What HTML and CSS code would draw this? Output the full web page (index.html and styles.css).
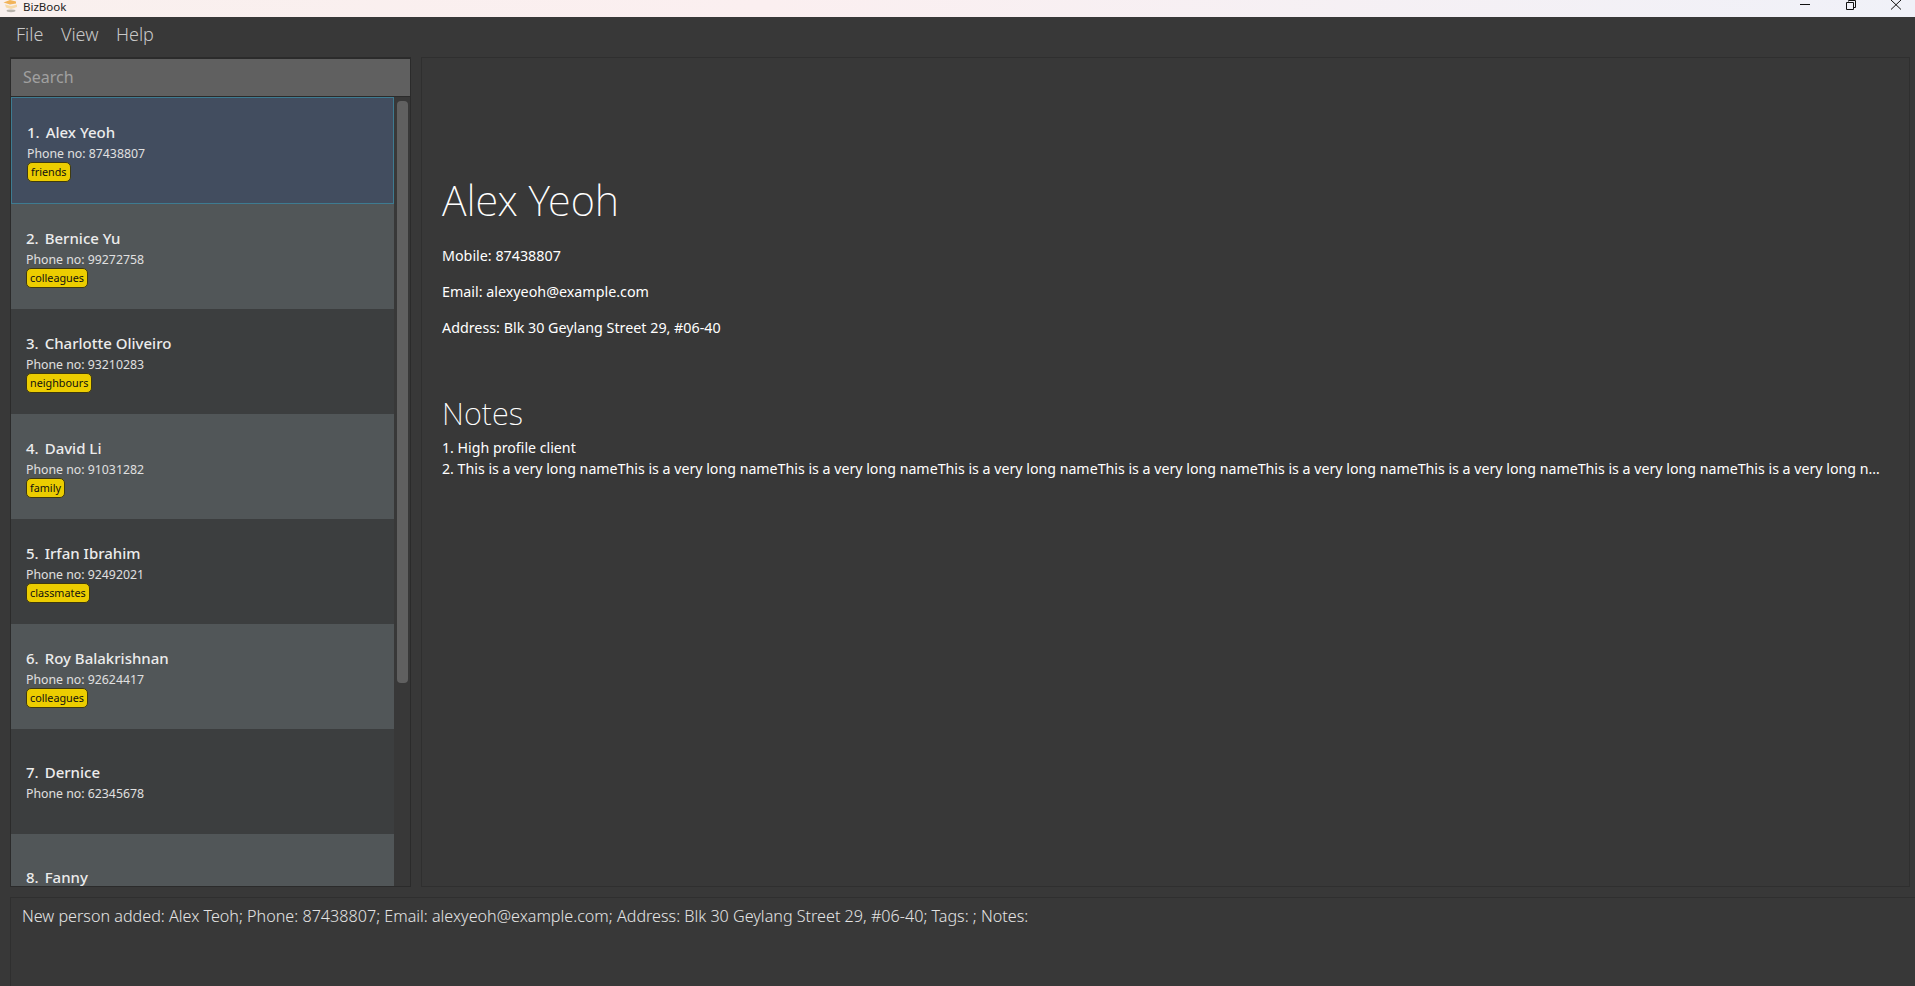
FILE: index.html
```html
<!DOCTYPE html>
<html lang="en">
  <head>
    <meta charset="UTF-8" />
    <title>BizBook</title>
    <link rel="stylesheet" href="styles.css">
  </head>
  <body>
    <header class="titlebar">
      <div class="app-name">
        <svg class="app-icon" width="14" height="13" viewBox="0 0 14 13">
          <ellipse cx="8" cy="10.8" rx="4.5" ry="1.4" fill="#b9b4ac" />
          <path d="M0.5 2.5 L7 0 L13 1.5 L13 3.5 L7 4.5 Z" fill="#f2b45a" />
          <path d="M2 4.5 L8 6 L14 4.5 L14 7 L8 9 L3 7.5 Z" fill="#f6d9a8" />
        </svg>
        <span>BizBook</span>
      </div>
      <div class="window-btns">
        <svg width="12" height="12" viewBox="0 0 12 12"><path d="M1 4.5h10" stroke="#111" fill="none" /></svg>
        <svg width="12" height="12" viewBox="0 0 12 12"><path d="M1.5 2.5h7v7h-7zM3.5 1.5V0.5h7v7H9" stroke="#111" fill="none" /></svg>
        <svg width="12" height="12" viewBox="0 0 12 12"><path d="M1 0l10 9.5M11 0L1 9.5" stroke="#111" fill="none" /></svg>
      </div>
    </header>

    <nav class="menubar">
      <span>File</span>
      <span>View</span>
      <span>Help</span>
    </nav>

    <main class="content">
      <section class="left-pane">
        <div class="search">Search</div>
        <div class="list-wrap">
          <div class="list">
            <article class="card selected">
              <h2><span class="num">1.</span>Alex Yeoh</h2>
              <p>Phone no: 87438807</p>
              <span class="tag">friends</span>
            </article>
            <article class="card even">
              <h2><span class="num">2.</span>Bernice Yu</h2>
              <p>Phone no: 99272758</p>
              <span class="tag">colleagues</span>
            </article>
            <article class="card">
              <h2><span class="num">3.</span>Charlotte Oliveiro</h2>
              <p>Phone no: 93210283</p>
              <span class="tag">neighbours</span>
            </article>
            <article class="card even">
              <h2><span class="num">4.</span>David Li</h2>
              <p>Phone no: 91031282</p>
              <span class="tag">family</span>
            </article>
            <article class="card">
              <h2><span class="num">5.</span>Irfan Ibrahim</h2>
              <p>Phone no: 92492021</p>
              <span class="tag">classmates</span>
            </article>
            <article class="card even">
              <h2><span class="num">6.</span>Roy Balakrishnan</h2>
              <p>Phone no: 92624417</p>
              <span class="tag">colleagues</span>
            </article>
            <article class="card notag">
              <h2><span class="num">7.</span>Dernice</h2>
              <p>Phone no: 62345678</p>
            </article>
            <article class="card even notag">
              <h2><span class="num">8.</span>Fanny</h2>
            </article>
          </div>
          <div class="scrollbar"><div class="thumb"></div></div>
        </div>
      </section>

      <section class="detail">
        <h1>Alex Yeoh</h1>
        <p class="field">Mobile: 87438807</p>
        <p class="field">Email: alexyeoh@example.com</p>
        <p class="field">Address: Blk 30 Geylang Street 29, #06-40</p>
        <h3>Notes</h3>
        <p class="note">1. High profile client</p>
        <p class="note">2. This is a very long nameThis is a very long nameThis is a very long nameThis is a very long nameThis is a very long nameThis is a very long nameThis is a very long nameThis is a very long nameThis is a very long nameThis is a very long nameThis is a very long name</p>
      </section>
    </main>

    <footer class="result">New person added: Alex Teoh; Phone: 87438807; Email: alexyeoh@example.com; Address: Blk 30 Geylang Street 29, #06-40; Tags: ; Notes:</footer>
  </body>
</html>
```

FILE: styles.css
```css
* {
  box-sizing: border-box;
}

html,
body {
  height: 100%;
}

body {
  margin: 0;
  display: flex;
  flex-direction: column;
  overflow: hidden;
  background-color: #383838;
  color: white;
  font-family: "Noto Sans", "Open Sans", sans-serif;
}

/* title bar */

.titlebar {
  height: 17px;
  flex: none;
  display: flex;
  justify-content: space-between;
  align-items: flex-start;
  overflow: hidden;
  background: linear-gradient(to right, #f9f0ee, #fbeff0 40%, #f0f1f8);
  color: #222;
  font-size: 11.5px;
  line-height: 13px;
}

.app-name {
  display: flex;
  align-items: flex-start;
  gap: 6px;
}

.app-icon {
  margin-left: 3px;
}

.window-btns {
  display: flex;
  gap: 33.5px;
  padding-right: 13px;
}

.window-btns svg {
  display: block;
}

/* menu */

.menubar {
  height: 40px;
  flex: none;
  display: flex;
  align-items: center;
  gap: 17.5px;
  padding: 0 0 6px 16px;
  background-color: #383838;
  color: #c8c8c8;
  font-size: 18px;
  font-weight: 300;
}

/* main panes */

.content {
  height: 830px;
  flex: none;
  display: flex;
  gap: 10px;
  padding: 0 5px 0 10px;
}

.left-pane {
  width: 401px;
  flex: none;
  display: flex;
  flex-direction: column;
  border: 1px solid #2b2b2b;
  border-top-width: 2px;
}

.search {
  height: 38px;
  flex: none;
  padding-left: 12px;
  background-color: #606060;
  color: #a0a0a0;
  font-size: 16px;
  line-height: 36px;
  border-bottom: 1px solid #2b2b2b;
}

.list-wrap {
  flex: 1;
  min-height: 0;
  display: flex;
}

.list {
  width: 383px;
  flex: none;
  overflow: hidden;
  background-color: #3c3e3f;
}

.scrollbar {
  flex: 1;
  padding: 4px 2px 0 3px;
  background-color: #383838;
}

.thumb {
  height: 582px;
  border-radius: 4px;
  background-color: #606060;
}

.card {
  height: 105px;
  padding: 23px 0 0 15px;
  background-color: #3c3e3f;
}

.card.even {
  background-color: #515658;
}

.card.selected {
  height: 107px;
  background-color: #424d5f;
  border: 1px solid #3e7b91;
}

.card.notag {
  padding-top: 32px;
}

.card h2 {
  margin: 0;
  font-size: 15px;
  font-weight: 500;
  line-height: 23px;
  color: #ececec;
}

.num {
  margin-right: 6px;
}

.card p {
  margin: 0;
  font-size: 12.3px;
  line-height: 20px;
  color: #e0e0e0;
}

.tag {
  display: block;
  width: fit-content;
  height: 20px;
  margin-top: -2px;
  padding: 0 3px;
  border: 1px solid #3f3a10;
  border-radius: 5px;
  background-color: #eccd00;
  color: #111;
  font-size: 10.8px;
  line-height: 17px;
}

/* details */

.detail {
  flex: 1;
  min-width: 0;
  padding: 115px 26px 0 20px;
  border: 1px solid #2f2f2f;
}

.detail h1 {
  margin: 0 0 19px;
  font-size: 41.6px;
  font-weight: 200;
  line-height: 54px;
}

.field {
  margin: 0 0 16px;
  font-size: 14.3px;
  line-height: 20px;
}

.detail h3 {
  margin: 54px 0 0;
  font-size: 30.8px;
  font-weight: 200;
  line-height: 42px;
}

.note {
  margin: 0;
  font-size: 14.19px;
  line-height: 21px;
  white-space: nowrap;
  overflow: hidden;
  text-overflow: ellipsis;
}

.detail h3 + .note {
  margin-top: 3px;
}

/* command result */

.result {
  flex: 1;
  margin: 10px 0 0 10px;
  padding: 6px 11px;
  border: 1px solid #2f2f2f;
  border-right: none;
  border-bottom: none;
  color: #e4e4e4;
  font-size: 16.15px;
  font-weight: 300;
  line-height: 24px;
}
```
